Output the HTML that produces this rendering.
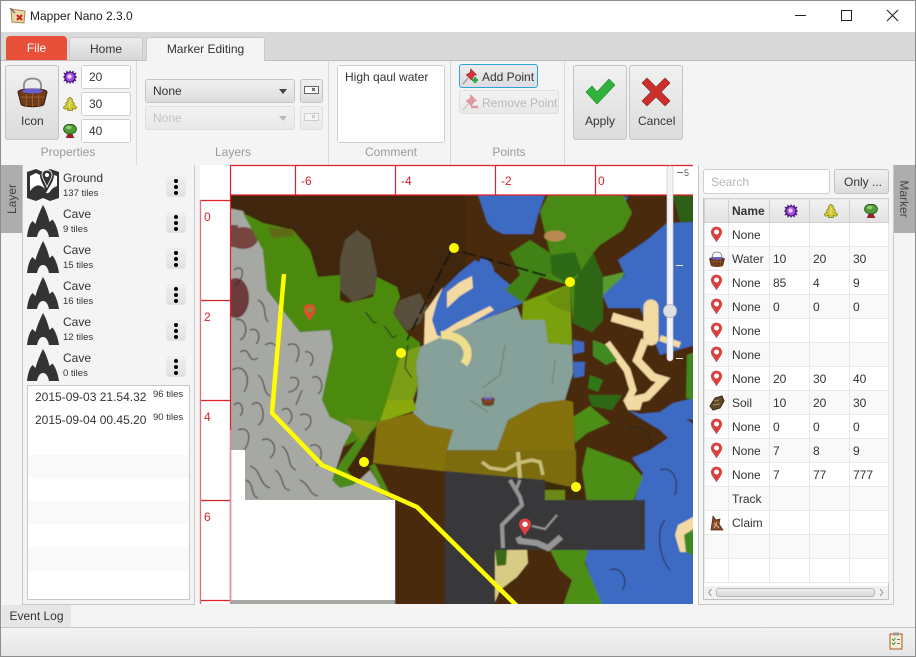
<!DOCTYPE html>
<html><head><meta charset="utf-8"><title>Mapper Nano 2.3.0</title>
<style>
html,body{margin:0;padding:0;width:916px;height:657px;overflow:hidden;background:#f4f4f4}
body{font-family:"Liberation Sans",sans-serif;font-size:12px;color:#333;position:relative}
.a,.t,.b{position:absolute;box-sizing:border-box}
.t{white-space:nowrap;line-height:16px;height:16px}
.b{border:1px solid #c4c4c4;border-radius:3px;background:linear-gradient(#f1f1f1,#dcdcdc)}
.i{border:1px solid #cfcfcf;border-radius:3px;background:#fff}
.g{color:#9a9a9a;transform:translateX(-50%)}
.d{opacity:.45}
table{border-collapse:collapse;table-layout:fixed;position:absolute;left:704px;top:198px;width:184px}
td,th{height:24px;padding:0 0 0 3px;border:1px solid #e9e9e9;font-weight:normal;text-align:left;overflow:hidden;white-space:nowrap;box-sizing:border-box}
td:first-child,th:first-child{padding:0;text-align:center}
td svg,th svg{display:block;margin:auto}
th{background:linear-gradient(#f1f1f1,#e2e2e2);border-color:#d0d0d0}
tr:nth-child(odd) td{background:#f9f9f9}
tr:nth-child(even) td{background:#fff}
.kb{left:166px;width:20px;height:21px;border-radius:3px;background:linear-gradient(#f0f0f0,#e0e0e0)}
.kb i{position:absolute;left:8px;width:4px;height:4px;border-radius:50%;background:#000}
</style></head><body>

<svg width="0" height="0" style="position:absolute"><defs>
<symbol id="pin" viewBox="0 0 14 18"><path d="M7 0.5C3.3 0.5 1 3.2 1 6.4 1 10 5 13.5 7 17.5 9 13.5 13 10 13 6.4 13 3.2 10.700 0.5 7 0.500Z" fill="#d8413f"/><circle cx="7" cy="6.300" r="2.700" fill="#fff"/></symbol>
<symbol id="star" viewBox="0 0 16 16"><path d="M8 0L9.500 2.500 12 .5 12.500 3.500 15.500 3 14 6 16 8 14 10 15.500 13 12.500 12.500 12 15.500 9.500 13.500 8 16 6.500 13.500 4 15.500 3.500 12.500 .5 13 2 10 0 8 2 6 .5 3 3.500 3.500 4 .5 6.500 2.500Z" fill="#4a1a78"/><circle cx="8" cy="8" r="5" fill="#a64ee8"/><circle cx="7.500" cy="7.500" r="2.400" fill="#eed8ff"/></symbol>
<symbol id="ytree" viewBox="0 0 16 16"><path d="M8 0L11 3 10.500 5 13 7 12.500 9 16 12 14 14 10.500 13 11 15.500 5 15.500 5.500 13 2 14 0 12 3.500 9 3 7 5.500 5 5 3Z" fill="#cfc92f" stroke="#76741a" stroke-width=".7"/><path d="M7 4L9 6 7 9 9 12" stroke="#f1ee80" fill="none"/></symbol>
<symbol id="gtree" viewBox="0 0 16 16"><path d="M5.500 8L10.500 8 11 12 13 16 3 16 5 12Z" fill="#9a1f28"/><ellipse cx="8" cy="5.800" rx="7.300" ry="5.600" fill="#4e9c33" stroke="#1f4f15"/><ellipse cx="6.500" cy="4" rx="3.400" ry="2" fill="#90cf70"/></symbol>
<symbol id="basket" viewBox="0 0 30 30"><path d="M7 13C5 3 11 2 15 2S25 3 23 13" fill="none" stroke="#8d8d8d" stroke-width="1.800"/><path d="M1 15C1 11 29 11 29 15L26 27C24 30 6 30 4 27Z" fill="#6f3a18" stroke="#35190a" stroke-width="1"/><ellipse cx="15" cy="14" rx="10" ry="2.400" fill="#6a5fd0"/><path d="M3 20H27M9 17V29M15 17V29M21 17V29" stroke="#9a6030" stroke-width="1" fill="none"/></symbol>
<symbol id="addpin" viewBox="0 0 20 20"><path d="M1 19L7 12" stroke="#9a9a9a" stroke-width="1.500"/><path d="M10 1L17 8 14 9 11 14 5 8 10 5Z" fill="#d8303c" stroke="#92202a" stroke-width=".7"/></symbol>
<symbol id="cave" viewBox="0 0 32 32"><path d="M0 32C.8 25 2.500 19 5.500 16L8.500 19C10 13 13 6 16 0 19 5 21 11 22.500 17L25.500 14.500C28.500 18 31 25 32 32H22C21 27 19 24 16 24S11 27 10 32Z" fill="#333"/></symbol>
<symbol id="ground" viewBox="0 0 32 32"><path d="M0 3L9 0 16 3 23 0 32 3V29L23 32 16 29 9 32 0 29Z" fill="#333"/><path d="M3 7L9 4 13 6C13 11 16 15 18 20 12 14 8 16 3 22Z" fill="#fff"/><path d="M27 6L30 7V17L26 19C23 22 22 25 19 24 22 18 27 12 27 6Z" fill="#fff"/><path d="M20 1C17 1 15 3 15 6 15 9 18 13 20 18 22 13 25 9 25 6 25 3 23 1 20 1Z" fill="#333" stroke="#fff" stroke-width=".8"/><circle cx="20" cy="6" r="2" fill="#fff"/></symbol>
<filter id="bl" x="-2%" y="-2%" width="104%" height="104%"><feGaussianBlur stdDeviation=".6"/></filter>
</defs></svg>

<!-- Title bar -->
<div class="a" style="left:0;top:0;width:916px;height:32px;background:#fff;border-top:1px solid #8d8d8d"></div>
<svg class="a" style="left:9px;top:7px" width="18" height="18" viewBox="0 0 18 18"><path d="M2 2L16 4 15 16 3 15Z" fill="#e9d9a8" stroke="#a38650"/><path d="M1 1L6 6" stroke="#666" stroke-width="1.300"/><path d="M8 8L13 13M13 8L8 13" stroke="#d2261f" stroke-width="2.200"/></svg>
<div class="t" style="left:30px;top:8px;color:#222">Mapper Nano 2.3.0</div>
<svg class="a" style="left:790px;top:8px" width="116" height="16" viewBox="0 0 116 16" fill="none" stroke="#222"><path d="M5 7.500H16"/><rect x="51.500" y="2.500" width="10" height="10"/><path d="M97 2L108 13M108 2L97 13" stroke-width="1.100"/></svg>

<!-- Tab bar -->
<div class="a" style="left:0;top:32px;width:916px;height:28px;background:#d9d9d9"></div>
<div class="a" style="left:6px;top:36px;width:61px;height:24px;background:#e8503a;border-radius:4px 4px 0 0;color:#fff;text-align:center;line-height:25px">File</div>
<div class="a" style="left:69px;top:37px;width:74px;height:23px;background:linear-gradient(#ededed,#d6d6d6);border:1px solid #c8c8c8;border-bottom:0;border-radius:3px 3px 0 0;text-align:center;line-height:23px">Home</div>
<div class="a" style="left:146px;top:37px;width:119px;height:24px;background:#f4f4f4;border:1px solid #c8c8c8;border-bottom:0;border-radius:3px 3px 0 0;text-align:center;line-height:23px;z-index:2">Marker Editing</div>

<!-- Ribbon -->
<div class="a" style="left:0;top:60px;width:916px;height:105px;background:#f4f4f4;border-top:1px solid #bdbdbd"></div>
<div class="a" style="left:136px;top:61px;width:1px;height:104px;background:#d9d9d9"></div>
<div class="a" style="left:328px;top:61px;width:1px;height:104px;background:#d9d9d9"></div>
<div class="a" style="left:450px;top:61px;width:1px;height:104px;background:#d9d9d9"></div>
<div class="a" style="left:564px;top:61px;width:1px;height:104px;background:#d9d9d9"></div>

<div class="b" style="left:5px;top:65px;width:54px;height:75px"></div>
<svg class="a" style="left:17px;top:75px" width="31" height="34"><use href="#basket" width="31" height="34"/></svg>
<div class="t" style="left:21px;top:113px">Icon</div>

<svg class="a" style="left:63px;top:70px" width="14" height="14"><use href="#star" width="14" height="14"/></svg>
<svg class="a" style="left:63px;top:97px" width="14" height="14"><use href="#ytree" width="14" height="14"/></svg>
<svg class="a" style="left:63px;top:124px" width="14" height="14"><use href="#gtree" width="14" height="14"/></svg>
<div class="a i" style="left:81px;top:65px;width:50px;height:24px"></div><div class="t" style="left:89px;top:69px">20</div>
<div class="a i" style="left:81px;top:92px;width:50px;height:24px"></div><div class="t" style="left:89px;top:96px">30</div>
<div class="a i" style="left:81px;top:119px;width:50px;height:24px"></div><div class="t" style="left:89px;top:123px">40</div>
<div class="t g" style="left:68px;top:144px">Properties</div>

<div class="b" style="left:145px;top:79px;width:150px;height:24px"></div><div class="t" style="left:153px;top:83px">None</div>
<div class="a" style="left:279px;top:89px;border:4px solid transparent;border-top:5px solid #444"></div>
<div class="b d" style="left:145px;top:106px;width:150px;height:24px"></div><div class="t" style="left:153px;top:110px;color:#c4c4c4">None</div>
<div class="a" style="left:279px;top:116px;border:4px solid transparent;border-top:5px solid #bbb"></div>
<div class="b" style="left:300px;top:79px;width:23px;height:24px"></div>
<svg class="a" style="left:303px;top:84px" width="17" height="12"><rect x="1.500" y="2.500" width="14" height="7" fill="#fff" stroke="#666"/><path d="M9 4L12 7M12 4L9 7" stroke="#444"/></svg>
<div class="b d" style="left:300px;top:106px;width:23px;height:24px"></div>
<svg class="a d" style="left:303px;top:111px" width="17" height="12"><rect x="1.500" y="2.500" width="14" height="7" fill="#fff" stroke="#aaa"/><path d="M9 4L12 7M12 4L9 7" stroke="#888"/></svg>
<div class="t g" style="left:233px;top:144px">Layers</div>

<div class="a i" style="left:337px;top:65px;width:108px;height:78px"></div>
<div class="t" style="left:345px;top:69px">High qaul water</div>
<div class="t g" style="left:391px;top:144px">Comment</div>

<div class="b" style="left:459px;top:64px;width:79px;height:24px;border:1.500px solid #2ea3d6;background:linear-gradient(#ececec,#dcdce2)"></div>
<svg class="a" style="left:462px;top:68px" width="17" height="17"><use href="#addpin" width="17" height="17"/><path d="M10 12H16M13 9V15" stroke="#2fa53a" stroke-width="2.400"/></svg>
<div class="t" style="left:482px;top:69px">Add Point</div>
<div class="b d" style="left:459px;top:90px;width:100px;height:24px"></div>
<svg class="a d" style="left:462px;top:94px" width="17" height="17"><use href="#addpin" width="17" height="17"/><path d="M9 13H16" stroke="#d8303c" stroke-width="2.400"/></svg>
<div class="t" style="left:482px;top:95px;color:#b8b8b8">Remove Point</div>
<div class="t g" style="left:509px;top:144px">Points</div>

<div class="b" style="left:573px;top:65px;width:54px;height:75px"></div>
<svg class="a" style="left:585px;top:77px" width="30" height="30"><path d="M1 15L7 9 12 15 24 2 30 8 12 27Z" fill="#2fb33c" stroke="#1f8a2b" stroke-width=".6"/></svg>
<div class="t" style="left:585px;top:113px">Apply</div>
<div class="b" style="left:629px;top:65px;width:54px;height:75px"></div>
<svg class="a" style="left:641px;top:77px" width="30" height="30"><path d="M1 6L6 1 15 10 24 1 29 6 20 15 29 24 24 29 15 20 6 29 1 24 10 15Z" fill="#c9302c" stroke="#8f1f1c" stroke-width=".6"/></svg>
<div class="t" style="left:638px;top:113px">Cancel</div>

<!-- Side tabs -->
<div class="a" style="left:0;top:165px;width:22px;height:68px;background:#adadad"></div>
<div class="t" style="left:-8px;top:191px;width:40px;text-align:center;transform:rotate(-90deg);color:#444">Layer</div>
<div class="a" style="left:894px;top:165px;width:22px;height:68px;background:#adadad"></div>
<div class="t" style="left:884px;top:191px;width:40px;text-align:center;transform:rotate(90deg);color:#444">Marker</div>

<!-- Left panel -->
<div class="a" style="left:22px;top:165px;width:173px;height:440px;background:#f4f4f4;border:1px solid #c8c8c8;border-top:0"></div>
<svg class="a" style="left:27px;top:169px" width="32" height="32"><use href="#ground" width="32" height="32"/></svg>
<div class="t" style="left:63px;top:170px">Ground</div><div class="t" style="left:63px;top:186px;font-size:9.500px">137 tiles</div>
<div class="a kb" style="top:176px"><i style="top:3px"></i><i style="top:9px"></i><i style="top:15px"></i></div>

<svg class="a" style="left:27px;top:205px" width="32" height="32"><use href="#cave" width="32" height="32"/></svg>
<div class="t" style="left:63px;top:206px">Cave</div><div class="t" style="left:63px;top:222px;font-size:9.500px">9 tiles</div>
<div class="a kb" style="top:212px"><i style="top:3px"></i><i style="top:9px"></i><i style="top:15px"></i></div>

<svg class="a" style="left:27px;top:241px" width="32" height="32"><use href="#cave" width="32" height="32"/></svg>
<div class="t" style="left:63px;top:242px">Cave</div><div class="t" style="left:63px;top:258px;font-size:9.500px">15 tiles</div>
<div class="a kb" style="top:248px"><i style="top:3px"></i><i style="top:9px"></i><i style="top:15px"></i></div>

<svg class="a" style="left:27px;top:277px" width="32" height="32"><use href="#cave" width="32" height="32"/></svg>
<div class="t" style="left:63px;top:278px">Cave</div><div class="t" style="left:63px;top:294px;font-size:9.500px">16 tiles</div>
<div class="a kb" style="top:284px"><i style="top:3px"></i><i style="top:9px"></i><i style="top:15px"></i></div>

<svg class="a" style="left:27px;top:313px" width="32" height="32"><use href="#cave" width="32" height="32"/></svg>
<div class="t" style="left:63px;top:314px">Cave</div><div class="t" style="left:63px;top:330px;font-size:9.500px">12 tiles</div>
<div class="a kb" style="top:320px"><i style="top:3px"></i><i style="top:9px"></i><i style="top:15px"></i></div>

<svg class="a" style="left:27px;top:349px" width="32" height="32"><use href="#cave" width="32" height="32"/></svg>
<div class="t" style="left:63px;top:350px">Cave</div><div class="t" style="left:63px;top:366px;font-size:9.500px">0 tiles</div>
<div class="a kb" style="top:356px"><i style="top:3px"></i><i style="top:9px"></i><i style="top:15px"></i></div>

<div class="a" style="left:27px;top:385px;width:163px;height:215px;background:#fff;border:1px solid #c8c8c8"></div>
<div class="a" style="left:28px;top:455px;width:161px;height:23px;background:#f9f9f9"></div>
<div class="a" style="left:28px;top:501px;width:161px;height:23px;background:#f9f9f9"></div>
<div class="a" style="left:28px;top:547px;width:161px;height:24px;background:#f9f9f9"></div>
<div class="t" style="left:35px;top:389px">2015-09-03 21.54.32</div><div class="t" style="left:153px;top:387px;font-size:9.500px">96 tiles</div>
<div class="t" style="left:35px;top:412px">2015-09-04 00.45.20</div><div class="t" style="left:153px;top:410px;font-size:9.500px">90 tiles</div>

<!-- Map + ruler -->
<div class="a" style="left:200px;top:165px;width:498px;height:439px;background:#fff"></div>
<svg class="a" style="left:0;top:0" width="916" height="657">
<clipPath id="mc"><rect x="230" y="195" width="463" height="409"/></clipPath>
<g clip-path="url(#mc)"><g filter="url(#bl)">
<rect x="225" y="190" width="475" height="420" fill="#4a2b0b"/>
<rect x="225" y="190" width="240" height="110" fill="#40260a"/>
<!-- grey -->
<polygon points="228,208 243,211 263,250 267,290 285,313 300,332 330,330 333,347 322,400 330,417 353,428 343,447 338,463 333,478 357,482 370,470 387,497 395,500 395,610 228,610" fill="#a6a8a3"/>
<ellipse cx="243" cy="238" rx="15" ry="11" fill="#74453f"/><rect x="228" y="225" width="10" height="22" fill="#74453f"/>
<ellipse cx="236" cy="298" rx="13" ry="20" fill="#6e3a3a"/>
<!-- green west -->
<polygon points="243,213 263,223 293,230 310,250 318,277 340,275 340,300 347,303 373,297 377,277 397,287 400,297 393,313 407,333 420,343 413,400 417,410 380,422 362,443 357,440 343,447 353,428 330,417 322,400 333,347 330,330 300,332 285,313 267,290 263,250" fill="#4c8a11"/>
<polygon points="268,227 292,229 294,236 272,238" fill="#5f6b15"/>
<polygon points="345,240 357,230 370,240 377,273 375,293 353,302 340,290 340,260" fill="#59503c"/>
<polygon points="393,313 400,300 420,293 427,307 420,323 407,331" fill="#59503c"/>
<path d="M357,440 L340,463 332,480 340,488 353,485 357,482 347,470 373,436Z" fill="#4b8a14"/>
<polygon points="347,470 373,430 376,462 358,480" fill="#40260a"/>
<path d="M372,465 L387,495" stroke="#4f8a12" stroke-width="6"/>
<!-- water centre -->
<polygon points="424,345 437,295 447,285 460,272 475,260 490,268 510,285 525,302 460,330" fill="#3d6bc2"/>
<path d="M424,345 L425,312 443,287 437,302 432,320 437,335 460,346Z" fill="#f3d9a2"/>
<polygon points="447,292 460,282 472,276 473,288 460,296 447,308" fill="#f3d9a2"/>
<polygon points="442,332 458,322 490,306 494,310 460,330 450,338" fill="#f3d9a2"/>
<path d="M480,260 C494,266 493,276 482,280" fill="none" stroke="#3d6bc2" stroke-width="7"/>
<!-- upper north water / green -->
<polygon points="478,195 487,222 493,229 503,234 533,234 538,215 545,195" fill="#3d6bc2"/>
<polygon points="617,195 622,207 628,197" fill="#3d6bc2"/>
<polygon points="540,212 548,195 623,195 632,213 623,230 600,245 593,253 603,277 603,320 592,332 573,323 570,285 540,277 560,270 550,253" fill="#4a8a17"/>
<polygon points="510,253 530,240 550,253 560,270 540,277 523,303 505,290 520,275" fill="#3f8215"/>
<polygon points="575,280 593,253 603,277 603,320 592,332 573,323" fill="#2e6614"/>
<polygon points="550,255 575,252 582,272 565,282 552,275" fill="#2f6b12"/>
<ellipse cx="555" cy="236" rx="11" ry="5.500" fill="#b88a50"/>
<polygon points="673,195 693,195 693,222 680,222" fill="#2f5f18"/>
<polygon points="603,277 625,272 612,297 603,297" fill="#5a9a30"/>
<!-- right water -->
<polygon points="618,260 647,240 667,223 695,222 695,345 660,355 652,335 640,308 608,308 603,295 625,275" fill="#3d6bc2"/>
<polygon points="628,410 640,418 660,430 668,438 650,450 632,458 643,473 635,500 645,500 645,550 587,550 585,560 600,606 695,606 695,425 680,415 673,403 660,412 640,414" fill="#3d6bc2"/>
<polygon points="673,403 695,398 695,420 680,418" fill="#3d6bc2"/>
<!-- cream east -->
<path d="M612,317 L646,327" stroke="#f3d9a2" stroke-width="9" fill="none"/>
<path d="M651,307 L651,338" stroke="#f3d9a2" stroke-width="15" fill="none" stroke-linecap="round"/>
<path d="M607,343 L627,370 633,390 627,402" stroke="#f3d9a2" stroke-width="7" fill="none"/>
<path d="M645,340 L637,360 653,377 663,380 647,397 625,402" stroke="#f3d9a2" stroke-width="8" fill="none"/>
<path d="M660,338 L680,345" stroke="#f3d9a2" stroke-width="6"/>
<polygon points="593,340 606,345 617,360 606,365 593,356" fill="#3f8a20"/>
<polygon points="687,355 695,352 695,400 686,398" fill="#3f8a20"/>
<polygon points="573,340 584,342 584,352 573,354" fill="#3d6bc2"/>
<polygon points="573,362 585,362 584,376 574,378" fill="#3d6bc2"/>
<polygon points="590,375 603,380 598,392 588,388" fill="#2f7a18"/>
<polygon points="623,400 643,400 640,410 628,410" fill="#f3d9a2"/>
<polygon points="678,525 695,516 695,552 680,552 675,535" fill="#f3d9a2"/>
<polygon points="684,535 695,528 695,557 686,552" fill="#3f8a20"/>
<!-- south greens -->
<polygon points="573,417 590,406 610,423 587,433 575,443" fill="#4e8e15"/>
<polygon points="588,395 622,395 612,410 592,406" fill="#2d6a15"/>
<polygon points="587,447 630,463 643,477 633,502 587,502 582,470" fill="#4e8e15"/>
<polygon points="550,550 588,550 585,563 603,606 563,606 572,580 560,570" fill="#4e8e15"/>
<!-- teal centre -->
<polygon points="420,347 460,328 517,307 522,320 545,320 548,343 572,345 573,373 565,400 540,403 508,420 497,450 447,450 453,430 427,425 413,413 417,398 418,385 416,365" fill="#86a199"/>
<!-- lime overlays -->
<polygon points="523,302 570,284 572,345 548,343 545,320 522,320" fill="#7aa010"/>
<polygon points="545,298 570,284 571,313 555,307" fill="#6a9010"/>
<polygon points="401,353 420,346 416,365 418,385 413,400 387,400" fill="#7a9f12"/>
<polygon points="387,400 413,400 417,410 380,422" fill="#89a90e"/>
<polygon points="343,418 377,422 362,443" fill="#6f8a18"/>
<!-- teal-side sand -->
<path d="M441,335 C462,334 474,350 464,364" stroke="#f0de8e" stroke-width="8" fill="none"/>
<!-- olive -->
<polygon points="377,422 413,413 427,425 453,430 447,450 497,450 508,420 540,403 565,400 573,402 576,487 460,473 373,463" fill="#857207"/>
<polygon points="447,450 576,450 576,487 460,473 443,471" fill="#7d6c0b"/>
<!-- dark -->
<polygon points="445,471 545,480 545,500 645,500 645,550 495,550 495,606 445,606" fill="#38393b"/>
<polygon points="545,481 570,487 582,490 582,500 545,500" fill="#3c2a0e"/>
<polygon points="545,490 565,490 565,500 545,500" fill="#6b8a18"/>
<!-- sand -->
<polygon points="495,550 527,550 528,563 517,577 500,590 495,602" fill="#d8cb85"/>
<polygon points="495,550 507,550 506,565 497,566" fill="#3a6a15"/>
<!-- tracks -->
<path d="M482,462 L490,468 505,470 518,463 532,460 540,462 543,475" fill="none" stroke="#c6bd73" stroke-width="3.500"/>
<path d="M518,452 L520,478" fill="none" stroke="#c6bd73" stroke-width="4"/>
<path d="M510,480 L520,497 522,505 502,525 503,548" fill="none" stroke="#959597" stroke-width="4"/>
<path d="M520,480 L516,490" fill="none" stroke="#959597" stroke-width="3"/>
<path d="M518,537 L520,541 537,543 548,548 561,537" fill="none" stroke="#959597" stroke-width="6"/>
<path d="M532,526 L545,529 557,515" fill="none" stroke="#959597" stroke-width="2"/>
<!-- lines -->
<path d="M463,252 L550,277 M450,253 L407,340" stroke="#17130a" stroke-width="1.800" stroke-dasharray="14 4" fill="none"/>
<g fill="none" stroke="#23241f" stroke-width="1">
<path d="M234,270C245,262 245,280 235,285M240,352C252,345 246,365 258,358M232,370C245,362 252,380 244,392M252,405C262,395 268,420 258,425M238,430C250,425 252,440 244,450"/>
<path d="M258,300C268,305 262,315 268,322M265,345C276,338 282,352 274,364M288,345C298,340 302,352 296,362M290,378C303,374 300,392 288,392M300,415C312,410 315,425 305,430M262,440C272,435 280,450 270,458"/>
<path d="M250,466C262,470 258,484 270,488M282,446C292,454 286,466 296,470M310,446C322,440 325,458 316,466M246,480C255,484 250,496 258,498M300,480C310,484 308,494 318,496"/>
<path d="M236,320C246,316 250,335 240,340M275,470C285,476 280,490 290,490M296,405L302,390M258,375C266,380 262,392 270,396"/>
<path d="M234,405C240,398 246,410 240,416M282,410C290,404 296,418 288,424M312,378C320,372 326,388 318,394M250,330C258,326 262,338 256,344M305,352C312,350 316,360 310,366"/>
<path d="M365,312C372,318 372,325 377,322M384,326C392,334 392,342 396,335M408,345L405,368 412,378"/>
<path d="M628,430C645,420 655,440 648,450M660,470C672,465 680,480 675,495M665,520C655,530 660,560 670,570M610,570C620,565 630,580 622,590"/>
</g>
<g fill="none" stroke="#5e7770" stroke-width=".8"><path d="M505,345L500,375 482,388M555,360L552,385M470,400L488,412"/></g>
<use href="#basket" x="481" y="392" width="14" height="14"/>
</g>
<path d="M309.500,304.500C306,304.500 304,307 304,310 304,313 307,316 309.500,320 312,316 315,313 315,310 315,307 313,304.500 309.500,304.500Z" fill="#d9532a" stroke="#d9532a"/><circle cx="309.500" cy="310" r="2.400" fill="#6d9a35"/>
<use href="#pin" x="518" y="518" width="14" height="18"/>
<polyline points="284,274 272,413 322,465 417,507 517,606" fill="none" stroke="#ffff00" stroke-width="4.500" stroke-linejoin="round"/>
<g fill="#ffff00"><circle cx="454" cy="248" r="5"/><circle cx="570" cy="282" r="5"/><circle cx="401" cy="353" r="5"/><circle cx="364" cy="462" r="5"/><circle cx="576" cy="487" r="5"/></g>
<rect x="230" y="450" width="15" height="50" fill="#fff"/><rect x="230" y="500" width="165" height="100" fill="#fff"/>
</g>
<!-- ruler -->
<g stroke="#e0202c" stroke-width="1.200" fill="none">
<path d="M230,165.500H693M230,195H693M230.500,165V604"/>
<path d="M295.500,165V195M395.500,165V195M495.500,165V195M595.500,165V195"/>
<path d="M200,200.500H230M200,300.500H230M200,400.500H230M200,500.500H230M200,600.500H230"/>
</g>
<path d="M200.500,200V604" stroke="#e07078" stroke-width="1.300"/>
<path d="M230.500,430V604" stroke="#df8f95" stroke-width="1.500"/>
<g fill="#d8202c" font-family="Liberation Sans, sans-serif" font-size="12"><text x="301" y="185">-6</text><text x="401" y="185">-4</text><text x="501" y="185">-2</text><text x="598" y="185">0</text><text x="204" y="221">0</text><text x="204" y="321">2</text><text x="204" y="421">4</text><text x="204" y="521">6</text></g>
<!-- slider -->
<rect x="667" y="166" width="6" height="195" rx="3" fill="#f3f3f6" stroke="#c9c9ce" stroke-width=".7"/>
<circle cx="670" cy="311" r="6.500" fill="#dfe0e4" stroke="#c0c0c4"/>
<path d="M677,172.500H683" stroke="#666"/><path d="M676,265.500H683M676,358.500H683" stroke="#e8e8e8"/>
<text x="684" y="176" font-size="9" fill="#555" font-family="Liberation Sans, sans-serif">5</text>
</svg>

<!-- Right panel -->
<div class="a" style="left:698px;top:165px;width:196px;height:440px;background:#f4f4f4;border:1px solid #c8c8c8;border-top:0"></div>
<div class="a i" style="left:703px;top:169px;width:127px;height:25px"></div>
<div class="t" style="left:711px;top:174px;color:#b5b5b5">Search</div>
<div class="b" style="left:834px;top:169px;width:55px;height:25px"></div>
<div class="t" style="left:844px;top:174px">Only ...</div>
<div class="a" style="left:703px;top:198px;width:186px;height:402px;background:#fff;border:1px solid #c2c2c2"></div>
<table><colgroup><col style="width:24px"><col style="width:41px"><col style="width:40px"><col style="width:40px"><col style="width:39px"></colgroup>
<tr><th></th><th style="font-weight:bold">Name</th><th><svg width="14" height="14"><use href="#star" width="14" height="14"/></svg></th><th><svg width="14" height="14"><use href="#ytree" width="14" height="14"/></svg></th><th><svg width="14" height="14"><use href="#gtree" width="14" height="14"/></svg></th></tr>
<tr><td><svg width="13" height="17"><use href="#pin" width="13" height="17"/></svg></td><td>None</td><td></td><td></td><td></td></tr>
<tr><td><svg width="16" height="16"><use href="#basket" width="16" height="16"/></svg></td><td>Water</td><td>10</td><td>20</td><td>30</td></tr>
<tr><td><svg width="13" height="17"><use href="#pin" width="13" height="17"/></svg></td><td>None</td><td>85</td><td>4</td><td>9</td></tr>
<tr><td><svg width="13" height="17"><use href="#pin" width="13" height="17"/></svg></td><td>None</td><td>0</td><td>0</td><td>0</td></tr>
<tr><td><svg width="13" height="17"><use href="#pin" width="13" height="17"/></svg></td><td>None</td><td></td><td></td><td></td></tr>
<tr><td><svg width="13" height="17"><use href="#pin" width="13" height="17"/></svg></td><td>None</td><td></td><td></td><td></td></tr>
<tr><td><svg width="13" height="17"><use href="#pin" width="13" height="17"/></svg></td><td>None</td><td>20</td><td>30</td><td>40</td></tr>
<tr><td><svg width="16" height="16" viewBox="0 0 16 16"><path d="M1 11L6 3 13 1 15 6 11 13 4 15Z" fill="#5e4a2a" stroke="#33270f"/><path d="M5 6L10 5M4 10L11 9" stroke="#a08c5a"/></svg></td><td>Soil</td><td>10</td><td>20</td><td>30</td></tr>
<tr><td><svg width="13" height="17"><use href="#pin" width="13" height="17"/></svg></td><td>None</td><td>0</td><td>0</td><td>0</td></tr>
<tr><td><svg width="13" height="17"><use href="#pin" width="13" height="17"/></svg></td><td>None</td><td>7</td><td>8</td><td>9</td></tr>
<tr><td><svg width="13" height="17"><use href="#pin" width="13" height="17"/></svg></td><td>None</td><td>7</td><td>77</td><td>777</td></tr>
<tr><td></td><td>Track</td><td></td><td></td><td></td></tr>
<tr><td><svg width="14" height="16" viewBox="0 0 14 16"><path d="M1 15L3 1 6 5 10 4 9 9 13 15Z" fill="#8a4a28" stroke="#4a2412" stroke-width=".7"/><path d="M4 8L9 13M7 7L4 13" stroke="#dcb48c"/></svg></td><td>Claim</td><td></td><td></td><td></td></tr>
<tr><td></td><td></td><td></td><td></td><td></td></tr>
<tr><td></td><td></td><td></td><td></td><td></td></tr>
</table>
<div class="a" style="left:704px;top:586px;width:184px;height:13px;background:#f1f1f1"></div>
<div class="a" style="left:716px;top:588px;width:159px;height:9px;border:1px solid #b8b8b8;border-radius:3px;background:linear-gradient(#eee,#d8d8d8)"></div>
<svg class="a" style="left:705px;top:587px" width="182" height="11" fill="none" stroke="#999"><path d="M6.500 2L3.500 5.500 6.500 9M175 2L178 5.500 175 9"/></svg>

<!-- Bottom -->
<div class="a" style="left:2px;top:605px;width:69px;height:22px;background:#e6e6e6;text-align:center;line-height:22px">Event Log</div>
<div class="a" style="left:0;top:627px;width:916px;height:30px;background:linear-gradient(#f3f3f3,#e6e6e6);border-top:1px solid #c8c8c8;border-bottom:1px solid #8d8d8d"></div>
<svg class="a" style="left:889px;top:632px" width="14" height="18" viewBox="0 0 14 18"><rect x="1" y="2" width="12" height="15" fill="#f6ecd8" stroke="#a5561c"/><rect x="4" y="0.500" width="6" height="3" fill="#999"/><path d="M3 7L4.500 8.500 6.500 6M3 11L4.500 12.500 6.500 10" stroke="#2a9a2a" fill="none"/><path d="M8 7.500H11M8 11.500H11" stroke="#777"/></svg>

<div class="a" style="left:0;top:0;width:916px;height:657px;border:1px solid #8d8d8d;pointer-events:none;z-index:9"></div>
</body></html>
